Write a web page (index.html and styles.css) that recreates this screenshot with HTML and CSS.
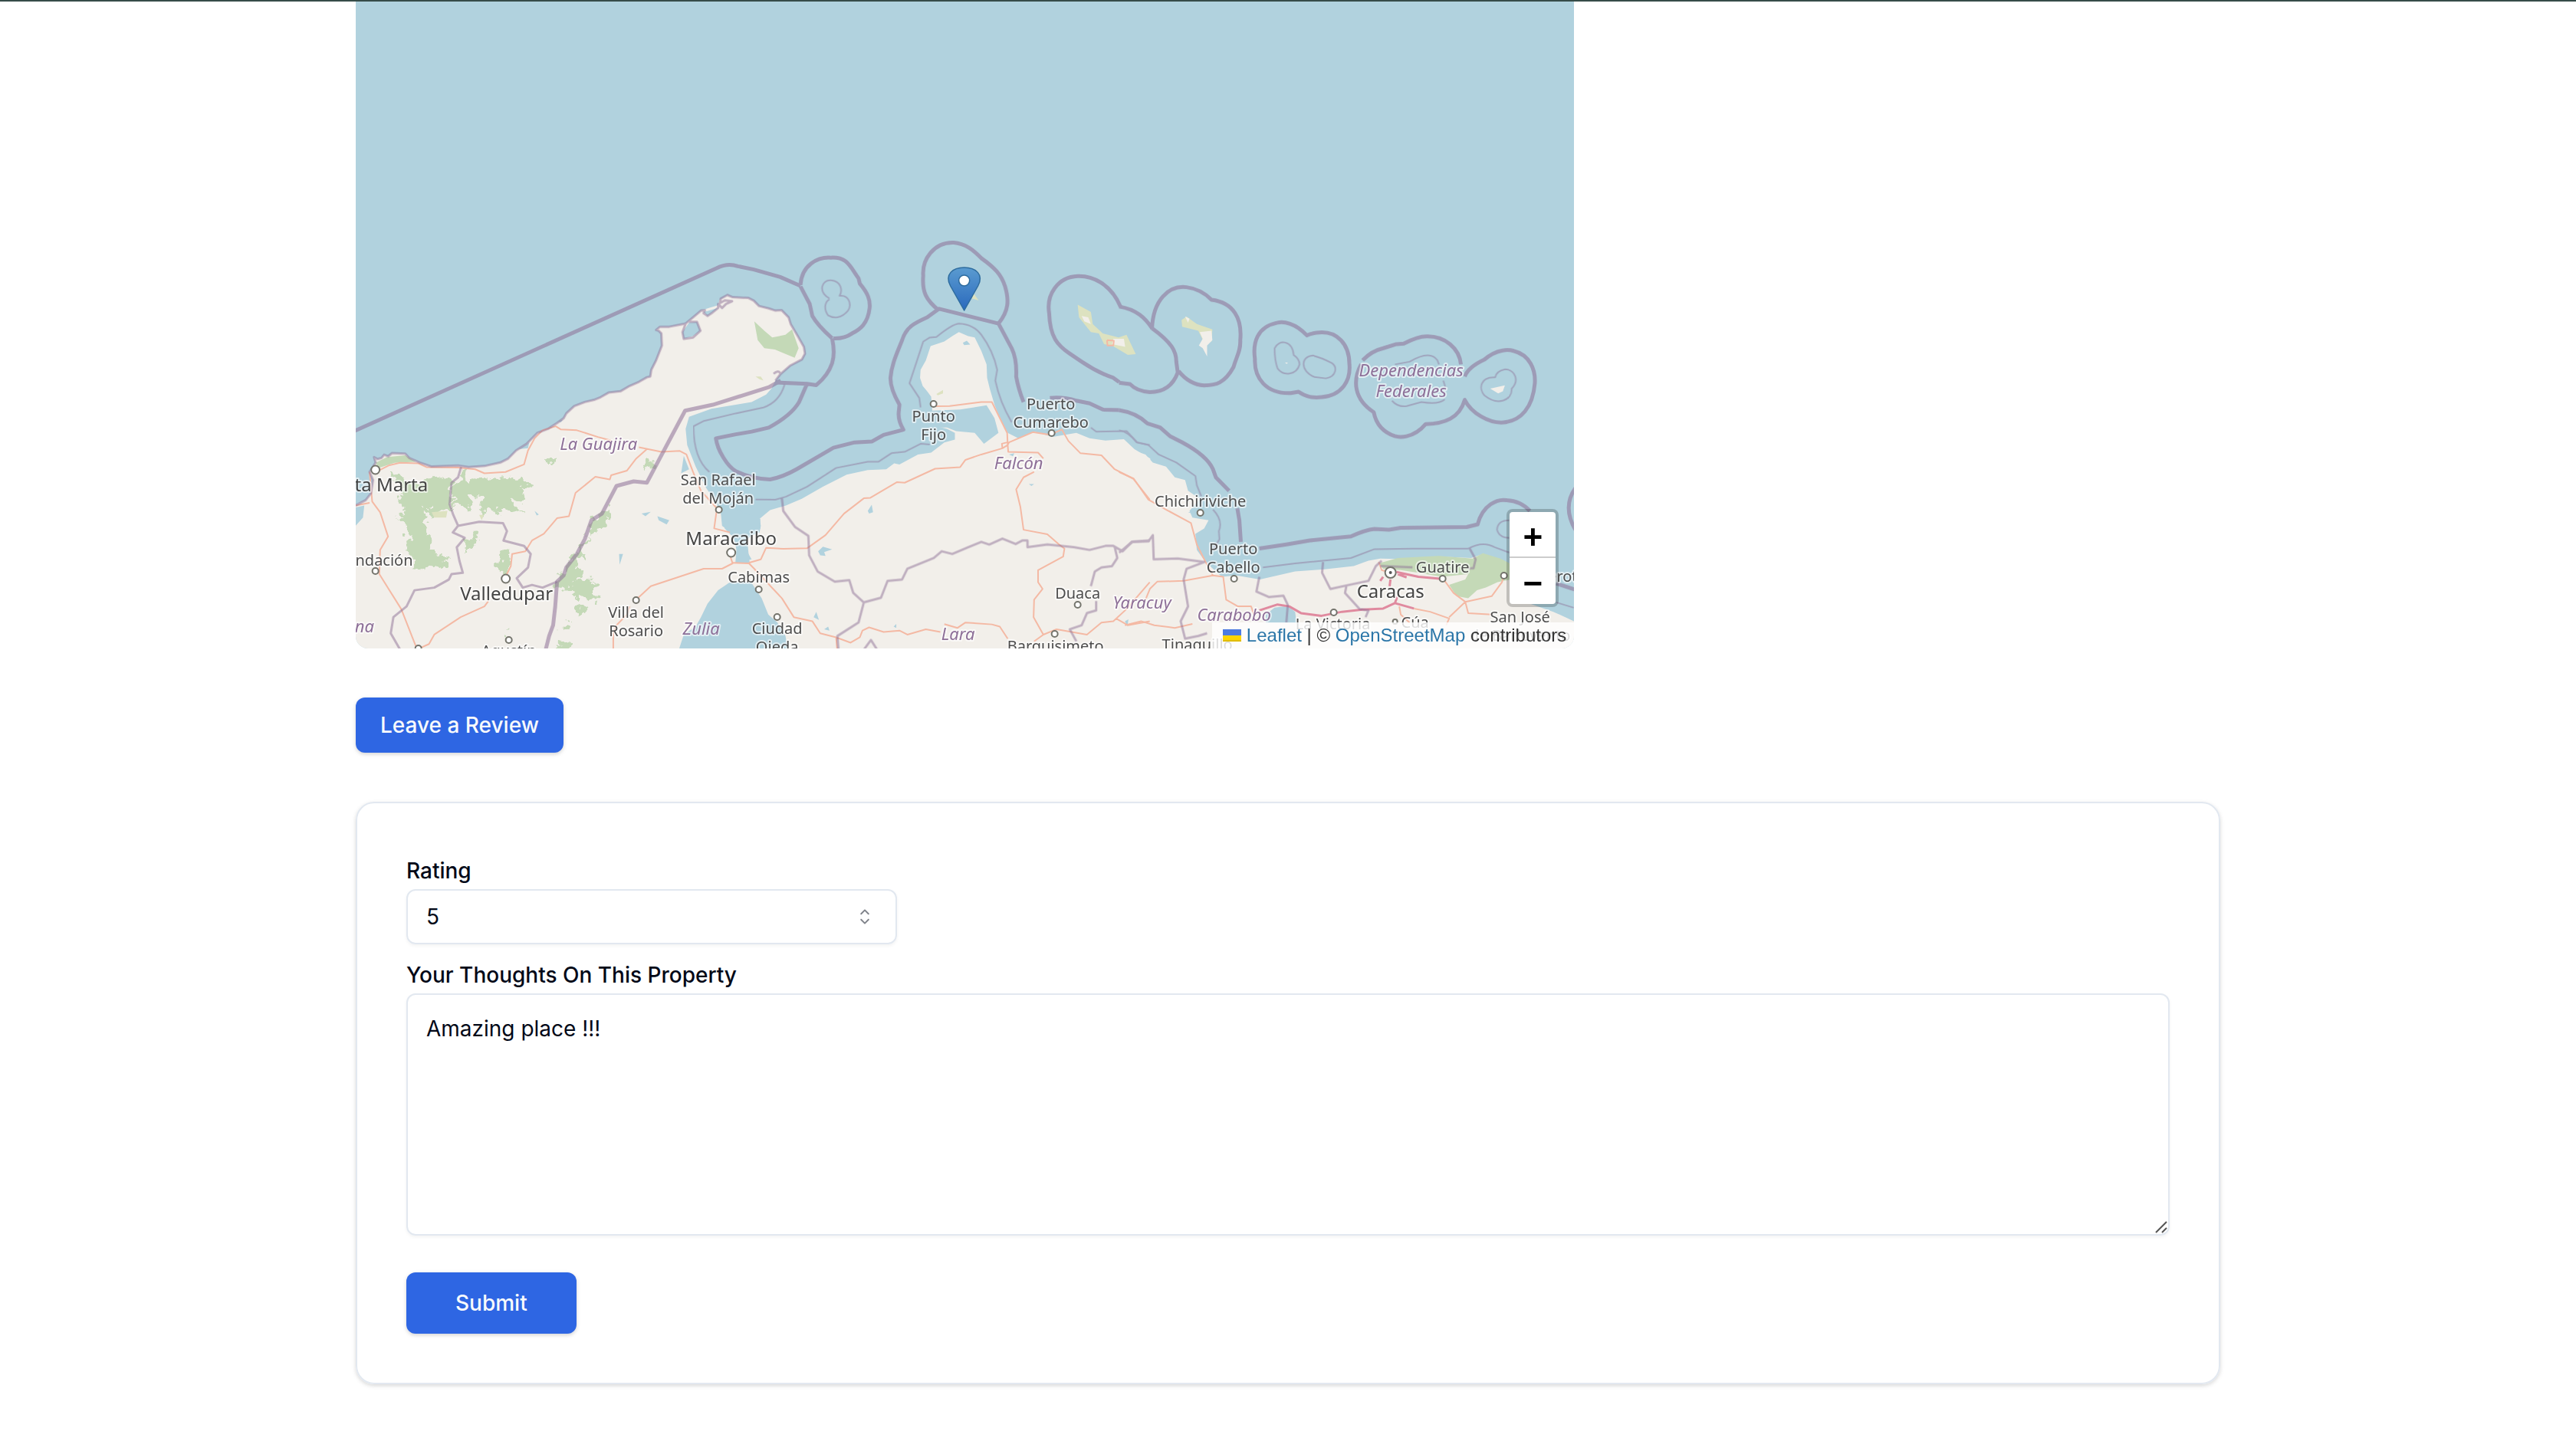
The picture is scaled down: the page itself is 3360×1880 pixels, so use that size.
FILE: index.html
```html
<!DOCTYPE html>
<html lang="en">
<head>
<meta charset="utf-8">
<title>Property</title>
<link rel="stylesheet" href="styles.css">
</head>
<body>
<header class="navbar"></header>
<main class="container">
  <section class="details">
    <div class="map">
      <svg class="tiles" viewBox="0 2 1590 844" preserveAspectRatio="xMidYMid slice" role="img" aria-label="Map">
        <defs>
          <linearGradient id="pin" x1="0" y1="0" x2="0" y2="1">
            <stop offset="0" stop-color="#5a9bd0"/><stop offset="1" stop-color="#2a69bd"/>
          </linearGradient>
          <filter id="ragged" x="-5%" y="-5%" width="110%" height="110%">
            <feTurbulence type="fractalNoise" baseFrequency=".09" numOctaves="3" seed="4"/>
            <feDisplacementMap in="SourceGraphic" scale="22" xChannelSelector="R" yChannelSelector="G"/>
          </filter>
        </defs>

        <!-- land -->
        <g class="land">
          <path transform="translate(-4 300) scale(.3444 .3508)" d="M0,1028 L50,1005 70,980 78,930 65,900 88,865 82,845 95,852 110,848 120,836 135,842 150,830 200,832 215,848 255,865 300,880 400,876 440,882 500,878 560,865 590,850 620,820 660,795 700,755 740,740 775,718 800,700 810,682 840,655 880,640 915,632 940,622 970,605 1015,600 1050,580 1085,565 1115,548 1128,545 1132,520 1150,485 1172,430 1170,385 1160,375 1150,372 1165,360 1200,360 1262,348 1290,325 1320,300 1350,290 1385,280 1390,260 1420,242 1440,250 1500,253 1520,263 1540,283 1577,292 1602,300 1625,298 1652,325 1660,350 1687,395 1710,435 1714,460 1702,482 1657,505 1622,535 1602,560 1587,590 1567,612 1512,640 1452,650 1360,665 1275,695 1262,740 1268,800 1300,880 1340,960 1375,1010 1395,1050 1400,1100 1440,1130 1455,1190 1450,1240 1500,1240 1500,1580 0,1580Z"/>
          <path transform="translate(496 300) scale(.3444 .3508)" d="M90,1075 L130,1042 190,1025 250,1000 330,955 420,910 500,893 570,890 600,868 620,872 690,835 740,828 790,790 830,780 830,755 800,740 760,730 740,715 745,680 740,620 725,600 708,580 698,550 700,520 720,485 738,432 790,415 820,395 845,380 880,395 905,400 930,450 950,500 952,550 962,590 980,650 1000,700 1030,755 1070,775 1130,750 1200,770 1290,755 1340,775 1400,783 1470,778 1510,815 1570,850 1570,1580 -10,1580 -10,1240 60,1225 40,1190 20,1150 90,1125 95,1100Z"/>
          <path transform="translate(996 300) scale(.3827 .3508)" d="M0,780 L50,820 90,835 115,865 160,880 190,920 225,930 235,970 275,1000 240,1045 250,1070 305,1080 290,1110 260,1130 265,1190 295,1235 350,1290 400,1285 480,1300 600,1270 700,1262 800,1250 850,1230 890,1222 1000,1225 1100,1215 1200,1220 1240,1205 1300,1225 1340,1260 1340,1330 1400,1390 1480,1420 1560,1460 1560,1580 0,1580Z"/>
        </g>

        <!-- woodland -->
        <g class="wood">
          <path transform="translate(-4 300) scale(.3444 .3508)" d="M88,866 L130,845 200,838 240,862 160,866 100,885Z M1522,340 L1560,375 1590,400 1640,390 1665,370 1690,440 1675,475 1600,445 1560,440 1535,410Z"/>
          <path transform="translate(996 300) scale(.3827 .3508)" d="M885,1240 L950,1220 1090,1212 1205,1222 1240,1202 1300,1222 1340,1245 1335,1300 1290,1310 1250,1330 1220,1340 1190,1370 1150,1362 1125,1320 1180,1300 1190,1280 1100,1290 1020,1275 960,1265 900,1260Z"/>
        </g>
        <g class="wood" filter="url(#ragged)">
          <path transform="translate(-4 300) scale(.3444 .3508)" d="M150,910 L185,905 200,935 270,930 330,920 370,935 372,980 375,1040 350,1050 330,1040 300,1075 290,1040 270,1045 275,1090 295,1110 290,1190 370,1220 350,1245 310,1240 280,1265 235,1255 240,1215 205,1190 215,1110 170,1080 205,1050 170,1000 195,960Z M415,890 L435,900 420,920 520,925 600,920 635,935 690,945 630,965 650,990 610,1010 650,1050 590,1040 550,1055 520,1030 495,1060 485,1000 440,990 450,1050 410,1020 380,1030 380,940 410,920Z M1105,870 L1120,855 1150,865 1140,895 1100,885Z M970,1030 L975,1080 940,1120 890,1125 905,1080Z M890,1125 L870,1220 850,1240 865,1280 845,1300 880,1310 930,1295 915,1350 935,1385 885,1370 855,1375 820,1330 770,1330 800,1260 850,1200Z M745,845 L760,850 755,875 742,868Z M560,1190 L595,1190 600,1240 580,1270 555,1270Z M480,1120 L470,1160 440,1200 415,1200 440,1145Z M855,1395 L885,1400 880,1430 850,1440Z M790,1465 L835,1450 820,1485 790,1490Z M785,1535 L840,1530 820,1568 770,1568Z M585,1485 L598,1500 590,1512Z"/>
        </g>
        <g class="scrub">
          <path transform="translate(496 300) scale(.3444 .3508)" d="M1295,278 L1345,305 1352,350 1390,385 1450,400 1480,390 1515,462 1485,465 1425,430 1395,425 1375,385 1345,380 1300,325Z M760,610 L785,595 785,608 765,615Z M75,545 L95,545 105,560 90,555Z M900,235 L920,262 895,255Z"/>
          <path transform="translate(996 300) scale(.3827 .3508)" d="M213,335 L230,322 265,350 318,370 315,415 290,420 270,375 215,360Z"/>
          <path transform="translate(-4 300) scale(.3444 .3508)" d="M300,1050 L360,1045 355,1070 310,1070Z M480,1060 L497,1060 490,1080Z"/>
        </g>
        <g class="land">
          <path transform="translate(496 300) scale(.3444 .3508)" d="M1310,320 L1335,325 1345,350 1320,340Z M1430,405 L1470,405 1475,435 1425,425Z"/>
          <path transform="translate(996 300) scale(.3827 .3508)" d="M225,322 L240,330 235,345Z M275,380 L315,375 318,410 300,430 300,470 285,440 272,430 285,405Z M1265,590 L1315,578 1308,600 1292,608Z M565,493 L575,493 572,498Z"/>
        </g>

        <!-- lakes and bays -->
        <g class="water">
          <path transform="translate(-4 300) scale(.3444 .3508)" d="M1392,1030 L1452,1040 1545,1075 1545,1110 1495,1150 1500,1200 1505,1240 1455,1240 1455,1190 1450,1150 1410,1110Z M1430,1310 L1385,1340 1345,1390 1320,1440 1300,1475 1255,1505 1230,1580 1655,1580 1640,1510 1610,1460 1575,1430 1550,1370 1510,1310Z M1250,380 L1275,345 1305,342 1318,375 1290,395 1255,405Z M1330,305 L1350,300 1385,290 1345,320Z M1095,1055 L1130,1048 1110,1065Z M1155,1065 L1200,1080 1190,1095 1160,1080Z M1255,840 L1275,890 1245,905Z M1010,1205 L1025,1205 1012,1245Z M0,1035 L45,1025 40,1070 12,1100 0,1110Z M690,1045 L706,1058 698,1062Z M630,815 L670,790 665,812Z M775,712 L798,705 790,715Z"/>
          <path transform="translate(496 300) scale(.3444 .3508)" d="M720,690 L745,672 850,668 950,652 980,700 995,755 940,795 905,755 835,748 800,735 760,735 725,740Z M312,1195 L330,1178 365,1188 335,1198 340,1212 320,1210Z M860,420 L875,412 888,426 865,428Z M500,1045 L515,1022 520,1050 505,1055Z M295,1440 L305,1420 315,1450Z M335,1485 L350,1475 355,1490Z M1110,945 L1130,945 1120,952Z M598,1475 L608,1465 608,1480Z M1035,835 L1055,830 1050,842Z"/>
          <path transform="translate(996 300) scale(.3827 .3508)" d="M500,1430 L530,1405 575,1398 600,1420 605,1462 500,1462Z M235,1050 L270,1045 265,1060Z M20,1455 L32,1448 28,1475Z"/>
        </g>

        <!-- roads -->
        <g class="road">
          <path transform="translate(-4 300) scale(.3444 .3508)" d="M90,900 L140,875 180,866 250,868 280,882 400,884 465,890 500,905 580,900 650,872 665,820 690,775 720,745 770,730 790,742 850,745 930,770 980,783 M1085,808 L1170,825 1240,822 1265,835 1290,900 1320,970 1380,1035 M1115,815 L1075,850 1040,895 980,912 975,928 920,918 845,978 820,1065 775,1072 725,1130 680,1155 655,1195 605,1205 600,1250 570,1310 M65,900 L75,1010 105,1050 135,1140 105,1190 102,1280 185,1410 245,1560 290,1540 310,1505 410,1440 500,1400 515,1380 M1430,1210 L1440,1240 1400,1260 1330,1260 1130,1325 1075,1375 M1050,1400 L1040,1430 1000,1470 988,1500 988,1580 M1380,1040 L1370,1110 1430,1125 M65,1015 L12,1025"/>
          <path transform="translate(496 300) scale(.3444 .3508)" d="M-12,1238 L50,1240 70,1260 175,1370 220,1440 290,1455 320,1500 380,1515 435,1535 470,1515 480,1490 505,1478 560,1495 620,1490 650,1505 720,1485 775,1495 M790,1466 L840,1480 870,1460 970,1467 1000,1475 1030,1520 M50,1238 L95,1225 115,1182 180,1186 270,1184 340,1135 410,1055 485,998 510,996 610,938 640,940 755,888 850,882 870,855 930,835 1010,812 1030,800 1028,755 970,640 930,640 810,655 750,656 M1030,800 L1035,790 1125,752 1190,762 1235,742 1260,785 1305,830 1385,838 1435,890 1505,925 1568,1003 M1010,812 L1008,795 1028,790 M1030,800 L1032,825 1145,828 1165,850 M1130,900 L1090,920 1062,965 1078,1030 1090,1115 1180,1132 1225,1170 1245,1185 1240,1215 1145,1265 1145,1310 1162,1335 1130,1375 1128,1440 1165,1505 1215,1485 1330,1505 1385,1460 1430,1455 1480,1410 1568,1310 M1440,1445 L1485,1470 1568,1455 M1165,1505 L1130,1530 M380,1515 L385,1570 M1406,410 L1408,430 1430,430 1432,412 1406,410"/>
          <path transform="translate(996 300) scale(.3827 .3508)" d="M0,900 L50,925 100,1003 160,1040 245,1090 265,1170 295,1235 320,1285 355,1290 365,1375 405,1400 450,1400 460,1430 M320,1285 L220,1305 130,1308 105,1335 90,1375 M20,1470 L75,1455 120,1470 190,1480 250,1465 M885,1235 L895,1265 925,1275 M1105,1298 L1140,1350 1180,1383 1270,1362 1305,1310 1312,1285 M1180,1383 L1190,1425 1270,1430 M1180,1383 L1125,1440 M955,1400 L960,1430 990,1460 M1005,1408 L1060,1420 1125,1445 1115,1470"/>
        </g>
        <g class="motorway">
          <path transform="translate(996 300) scale(.3827 .3508)" d="M478,1415 L540,1393 580,1400 620,1425 690,1435 760,1420 830,1412 900,1408 940,1388 1005,1408 M940,1388 L948,1365 M945,1272 L1020,1290 1100,1298 M925,1300 L922,1325 M950,1280 L980,1292 M890,1305 L900,1290"/>
        </g>

        <!-- coastline that doubles as a boundary, and state borders -->
        <g class="state">
          <path transform="translate(-4 300) scale(.3444 .3508)" d="M12,1025 L50,1005 70,980 78,930 65,900 88,865 82,845 95,852 110,848 120,836 135,842 150,830 200,832 215,848 255,865 300,880 400,876 440,882 500,878 560,865 590,850 620,820 660,795 700,755 740,740 775,718 800,700 810,682 840,655 880,640 915,632 940,622 970,605 1015,600 1050,580 1085,565 1115,548 1128,545 1132,520 1150,485 1172,430 1170,385 1160,375 1150,372 1165,360 1200,360 1262,348 1290,325 1320,300 1335,298 1330,310 1345,320 1360,310 1385,290 1385,275 1400,290 1415,275 1438,265 1410,262 1392,272 1395,255 1420,242 1440,250 1500,253 1520,263 1540,283 1577,292 1602,300 1625,298 1652,325 1660,350 1687,395 1710,435 1714,460 1702,482 1657,505 1622,535 1602,560 M1595,535 Q1610,520 1620,532 M1262,348 L1250,380 1255,405 1290,400 1318,375 1305,342 1275,342"/>
          <path transform="translate(-4 300) scale(.3444 .3508)" d="M412,880 L400,920 375,940 368,1020 382,1060 400,1100 380,1125 425,1145 395,1180 405,1230 418,1275 375,1280 365,1300 310,1330 235,1340 205,1400 155,1440 145,1500 180,1560 M400,1100 L480,1085 570,1090 585,1120 572,1155 650,1175 675,1205 665,1255 622,1295 645,1330 680,1320 720,1330 775,1308"/>
          <path transform="translate(496 300) scale(.3444 .3508)" d="M175,998 L180,1045 225,1105 275,1138 278,1210 310,1270 375,1308 430,1302 445,1350 485,1385 550,1368 575,1305 630,1300 650,1260 700,1240 750,1220 780,1195 820,1205 880,1180 930,1160 960,1170 1010,1148 1060,1168 1085,1155 1105,1155 1105,1180 1180,1170 1280,1180 1340,1190 1400,1175 1430,1175 1465,1195 1500,1160 1568,1155 M485,1385 L465,1460 385,1510 390,1570 M1435,1178 L1445,1220 1425,1250 1385,1255 1360,1270 1345,1325 M1365,1380 L1365,1415 1330,1425 1310,1470 1265,1485 1290,1530 M480,1568 L512,1525 540,1568"/>
          <path transform="translate(996 300) scale(.3827 .3508)" d="M0,1200 L45,1160 100,1158 115,1135 118,1225 200,1222 290,1235 230,1260 220,1300 235,1400 210,1455 225,1520 270,1510 300,1500 M478,1290 L468,1345 510,1365 560,1360 575,1395 570,1460 M695,1235 L692,1275 720,1335 775,1322 850,1305 875,1250 895,1230 M775,1322 L770,1350 820,1410 850,1415 840,1440 M890,1250 L1000,1255 M1195,1185 L1215,1225 1208,1258 1190,1258"/>
        </g>

        <!-- national and maritime borders -->
        <g class="border">
          <path transform="translate(-4 300) scale(.3444 .3508)" d="M0,751 L1380,142 Q1420,122 1460,135 L1520,147 1620,175 1697,208 M1622,560 L1577,585 1365,650 1260,672 1115,940 1065,935 1000,952 985,980 945,1055 905,1080 880,1150 850,1205 810,1255 800,1285 775,1308 768,1400 760,1470 745,1510 730,1568"/>
          <path transform="translate(496 300) scale(.3444 .3508)" d="M245,210 L280,275 290,320 Q310,355 365,403 M245,205 C250,130 310,100 360,103 C420,100 430,130 465,180 L470,200 C500,235 510,260 507,290 C500,350 470,370 440,385 Q410,405 370,403 M365,403 C375,450 370,480 365,495 Q350,540 305,577 L270,572 150,567 M270,572 L240,640 Q210,690 125,735 L60,750 0,760 -75,775 C-70,820 -30,880 0,897 Q60,925 130,928 Q180,918 230,890 L370,810 450,790 515,787 560,762 635,743 Q615,710 617,680 L620,650 Q585,590 586,550 C590,500 610,460 630,410 C645,360 680,345 725,325 L770,293 995,348 M770,300 C720,260 705,230 710,170 C705,110 750,45 825,47 C870,50 900,75 930,105 C980,140 1005,165 1020,210 C1035,260 1035,300 995,348 L1045,440 Q1065,480 1062,545 Q1070,590 1090,640 M1190,625 Q1240,620 1290,635 L1340,645 1390,668 1452,670 M1457,285 C1420,200 1350,170 1295,172 C1220,175 1175,240 1187,310 C1190,400 1220,430 1265,460 L1310,490 Q1370,530 1430,550 L1452,566"/>
          <path transform="translate(996 300) scale(.3827 .3508)" d="M0,670 Q60,680 97,720 L140,735 175,768 215,790 Q300,840 320,890 L330,920 375,970 M403,1035 L410,1080 415,1160 M478,1185 L570,1170 650,1155 790,1140 Q840,1115 870,1112 L920,1115 960,1108 1185,1105 1222,1095 C1240,1020 1290,1000 1320,1005 Q1370,1008 1400,1045 M0,285 C60,295 90,330 112,365 C180,420 195,450 195,490 L200,530 C180,590 140,603 105,603 Q60,600 37,573 L0,568 M112,370 C115,260 170,205 230,213 Q280,220 315,260 C390,270 420,330 413,410 C415,450 400,470 390,510 C360,570 330,578 290,578 Q240,575 203,525 M640,392 C600,345 560,340 540,345 C470,360 455,420 463,480 C460,550 500,610 585,607 L612,602 C640,622 660,625 690,622 C760,615 790,560 785,500 C785,420 740,380 690,381 Q660,382 640,392Z M830,485 Q860,450 900,440 L945,425 970,423 Q1020,395 1050,396 C1110,395 1160,440 1165,500 M1178,545 Q1190,510 1245,482 C1290,440 1330,445 1345,450 C1400,465 1420,520 1417,570 C1410,660 1370,710 1310,716 C1260,720 1200,680 1178,632 C1160,700 1110,720 1045,722 C1000,780 950,770 940,767 Q880,745 868,678 C800,630 795,560 825,500 M1555,960 Q1510,1030 1555,1115 M1490,1315 L1560,1340"/>
        </g>
        <g class="baseline">
          <path transform="translate(496 300) scale(.3444 .3508)" d="M355,255 C310,230 325,185 360,187 C400,190 405,225 393,245 C430,240 440,280 425,300 C400,330 370,330 350,318 C330,290 340,265 355,258 M185,575 Q165,640 105,660 L0,682 -120,710 -160,730 Q-160,850 -100,900 M75,1002 L150,1003 190,992 270,955 380,885 500,862 540,862 590,830 640,825 700,795 735,798 M700,660 L695,625 658,570 685,490 710,415 735,400 760,398 Q820,350 845,348 Q900,350 930,390 Q975,450 990,520 L983,560 Q1000,640 1045,715 M1345,735 L1365,750 1480,748 1520,790 1568,800"/>
          <path transform="translate(996 300) scale(.3827 .3508)" d="M0,745 Q30,750 60,790 L100,800 135,835 195,865 260,915 265,950 280,990 M320,1040 Q355,1080 340,1120 L342,1150 320,1190 M490,1255 L600,1240 790,1220 870,1187 1000,1185 1190,1185 Q1240,1155 1280,1180 L1330,1200 M1330,1080 Q1290,1080 1288,1115 Q1295,1145 1330,1145 M595,465 C590,410 545,405 530,440 C530,480 535,500 540,515 C560,545 605,540 615,500 Q615,480 595,465Z M660,467 C620,470 615,520 665,547 L705,552 C740,545 745,510 725,495 Q690,475 660,467Z M940,500 L990,490 Q1060,445 1085,485 L1090,500 M1105,560 L1112,585 M930,635 Q950,660 980,655 L1030,640 Q1090,650 1110,630 M1282,548 C1230,545 1225,590 1245,615 C1290,655 1340,635 1338,590 C1365,560 1350,520 1315,518 Q1285,525 1282,548Z M1490,1385 L1550,1405"/>
        </g>

        <!-- places -->
        <g class="dots">
          <circle cx="26" cy="613" r="5.5"/><circle cx="196" cy="755" r="5.5"/><circle cx="490" cy="721" r="5.5"/>
          <circle cx="26" cy="745" r="4"/><circle cx="366" cy="783" r="4"/><circle cx="474" cy="665" r="4"/><circle cx="526" cy="769" r="4"/><circle cx="550" cy="805" r="4"/><circle cx="200" cy="835" r="4"/><circle cx="82" cy="846" r="4"/>
          <circle cx="754" cy="527" r="4"/><circle cx="908" cy="565" r="4"/><circle cx="942" cy="789" r="4"/><circle cx="912" cy="827" r="4"/><circle cx="1102" cy="669" r="4"/><circle cx="1146" cy="755" r="4"/><circle cx="1276" cy="799" r="4"/><circle cx="1418" cy="755" r="4"/><circle cx="1498" cy="751" r="4"/><circle cx="1356" cy="811" r="3"/>
          <circle cx="1350" cy="747" r="7"/><circle class="core" cx="1350" cy="747" r="2"/>
        </g>
        <g class="town">
          <text x="473" y="633">San Rafael</text><text x="473" y="657">del Moján</text>
          <text x="366" y="806">Villa del</text><text x="366" y="830">Rosario</text>
          <text x="526" y="760">Cabimas</text>
          <text x="550" y="827">Ciudad</text><text x="550" y="851">Ojeda</text>
          <text x="754" y="550">Punto</text><text x="754" y="574">Fijo</text>
          <text x="907" y="534">Puerto</text><text x="907" y="558">Cumarebo</text>
          <text x="942" y="781">Duaca</text><text x="913" y="850">Barquisimeto</text>
          <text x="1102" y="661">Chichiriviche</text>
          <text x="1145" y="723">Puerto</text><text x="1145" y="747">Cabello</text>
          <text x="1098" y="848">Tinaquillo</text>
          <text x="1275" y="821">La Victoria</text><text x="1382" y="819">Cúa</text>
          <text x="1418" y="747">Guatire</text><text x="1519" y="812">San José</text>
          <text x="1519" y="836">de Barlovento</text>
          <text x="200" y="856">Agustín</text>
          <text x="26" y="738">Fundación</text><text x="1558" y="759">Higuerote</text>
        </g>
        <g class="city">
          <text x="26" y="641">Santa Marta</text><text x="197" y="783">Valledupar</text>
          <text x="490" y="711">Maracaibo</text><text x="1350" y="780">Caracas</text>
        </g>
        <g class="region">
          <text x="317" y="587">La Guajira</text><text x="451" y="828">Zulia</text>
          <text x="865" y="612">Falcón</text><text x="786" y="835">Lara</text>
          <text x="1026" y="794">Yaracuy</text><text x="1146" y="810">Carabobo</text>
          <text x="1377" y="491">Dependencias</text><text x="1377" y="518">Federales</text>
          <text x="-31" y="825">Magdalena</text>
        </g>

        <!-- property marker -->
        <path fill="url(#pin)" stroke="#2e6c9e" stroke-width="1.5" d="M794,405 L776,373 C768,358 779,349 794,349 C809,349 820,358 812,373Z"/>
        <circle cx="794" cy="366" r="7" fill="#fff" stroke="#2e6c9e" stroke-width="1.5"/>
      </svg>
      <div class="map-controls">
        <div class="zoom">
          <button type="button" class="zoom-btn" aria-label="Zoom in">+</button>
          <button type="button" class="zoom-btn" aria-label="Zoom out">−</button>
        </div>
        <div class="attribution">
          <a href="#leaflet"><svg class="flag" viewBox="0 0 12 8" aria-hidden="true"><path fill="#4c7be1" d="M0 0h12v4H0z"/><path fill="#ffd500" d="M0 4h12v3H0z"/><path fill="#e0bc00" d="M0 7h12v1H0z"/></svg> Leaflet</a> | © <a href="#osm">OpenStreetMap</a> contributors
        </div>
      </div>
    </div>
  </section>

  <button type="button" class="btn">Leave a Review</button>

  <form class="card">
    <div class="field">
      <label for="rating">Rating</label>
      <div class="select">
        <select id="rating" name="rating">
          <option selected>5</option><option>4</option><option>3</option><option>2</option><option>1</option>
        </select>
        <svg class="caret" viewBox="0 0 15 15" fill="currentColor" aria-hidden="true"><path d="M4.93179 5.43179C4.75605 5.60753 4.75605 5.89245 4.93179 6.06819C5.10753 6.24392 5.39245 6.24392 5.56819 6.06819L7.49999 4.13638L9.43179 6.06819C9.60753 6.24392 9.89245 6.24392 10.0682 6.06819C10.2439 5.89245 10.2439 5.60753 10.0682 5.43179L7.81819 3.18179C7.73379 3.0974 7.61933 3.04999 7.49999 3.04999C7.38064 3.04999 7.26618 3.0974 7.18179 3.18179L4.93179 5.43179ZM10.0682 9.56819C10.2439 9.39245 10.2439 9.10753 10.0682 8.93179C9.89245 8.75606 9.60753 8.75606 9.43179 8.93179L7.49999 10.8636L5.56819 8.93179C5.39245 8.75606 5.10753 8.75606 4.93179 8.93179C4.75605 9.10753 4.75605 9.39245 4.93179 9.56819L7.18179 11.8182C7.35753 11.9939 7.64245 11.9939 7.81819 11.8182L10.0682 9.56819Z"/></svg>
      </div>
    </div>
    <div class="field">
      <label for="comment">Your Thoughts On This Property</label>
      <div class="textarea">
        <textarea id="comment" name="comment">Amazing place !!!</textarea>
        <svg class="grip" viewBox="0 0 16 16" aria-hidden="true"><path d="M1 15 15 1M9 15l6-6"/></svg>
      </div>
    </div>
    <button type="submit" class="btn btn-lg">Submit</button>
  </form>
</main>
</body>
</html>
```

FILE: styles.css
```css
:root {
  --ink: #020817;
  --line: #e2e8f0;
  --primary: #2e66e3;
}

* {
  box-sizing: border-box;
}

body {
  margin: 0;
  background: #fff;
  color: var(--ink);
  font: 400 28px/40px Inter, "Liberation Sans", sans-serif;
}

.navbar {
  height: 2px;
  background: #364c48;
}

.container {
  max-width: 2560px;
  margin: 0 auto;
  padding: 0 64px 64px;
}

.details {
  display: grid;
  grid-template-columns: repeat(12, minmax(0, 1fr));
  column-gap: 96px;
  margin-bottom: 64px;
}

/* Map */

.map {
  grid-column: span 8;
  position: relative;
  height: 844px;
  overflow: hidden;
  border-radius: 0 0 16px 16px;
  background: #b1d2de;
}

.tiles {
  position: absolute;
  inset: 0;
  width: 100%;
  height: 100%;
}

.tiles path {
  vector-effect: non-scaling-stroke;
  stroke-linejoin: round;
}

.land { fill: #f2efea; }
.wood { fill: #c4d9b7; }
.scrub { fill: #dde2c0; }
.water { fill: #b1d2de; }

.road,
.motorway,
.state,
.border,
.baseline {
  fill: none;
}

.road { stroke: #f4b9a4; stroke-width: 2px; }
.motorway { stroke: #e08a9f; stroke-width: 3px; }

.state,
.border,
.baseline {
  stroke: #8c6e95;
}

.state { stroke-width: 3px; opacity: .5; }
.border { stroke-width: 5px; opacity: .55; }
.baseline { stroke-width: 2px; opacity: .45; }

.dots { fill: #fff; stroke: #74746c; stroke-width: 2px; }
.core { fill: #555; stroke: none; }

.tiles text {
  font-family: "Noto Sans", sans-serif;
  text-anchor: middle;
  paint-order: stroke;
  stroke: rgba(255, 255, 255, .6);
  stroke-width: 4px;
  stroke-linejoin: round;
}

.town { font-size: 20px; fill: #4d4d4d; }
.city { font-size: 24px; fill: #444; }
.region { font-size: 22px; font-style: italic; fill: #8d6f98; }

.map-controls {
  position: absolute;
  right: 0;
  bottom: 0;
  display: flex;
  flex-direction: column;
  align-items: flex-end;
  gap: 20px;
}

.zoom {
  display: flex;
  flex-direction: column;
  margin-right: 20px;
  border: 4px solid rgba(0, 0, 0, .2);
  border-radius: 8px;
  background: #fff;
  background-clip: padding-box;
}

.zoom-btn {
  width: 60px;
  height: 60px;
  padding: 12px 0 0;
  border: 0;
  background: none;
  color: #000;
  font: 700 44px/48px "Liberation Mono", monospace;
}

.zoom-btn:first-child {
  border-bottom: 2px solid #ccc;
}

.attribution {
  padding: 0 10px 0 14px;
  background: rgba(255, 255, 255, .8);
  color: #333;
  font: 400 24px/34px "Liberation Sans", Arial, sans-serif;
  white-space: nowrap;
}

.attribution a {
  color: #2b76a8;
  text-decoration: none;
}

.flag {
  width: 24px;
  height: 16px;
}

/* Buttons */

.btn {
  display: block;
  height: 72px;
  padding: 0 32px;
  border: 0;
  border-radius: 12px;
  background: var(--primary);
  box-shadow: 0 2px 6px rgba(0, 0, 0, .1), 0 2px 4px rgba(0, 0, 0, .08);
  color: #f8fafc;
  font: inherit;
  font-weight: 500;
}

.btn-lg {
  height: 80px;
  padding: 0 64px;
}

/* Review form */

.card {
  margin-top: 64px;
  padding: 64px;
  border: 2px solid var(--line);
  border-radius: 24px;
  box-shadow: 0 2px 6px rgba(0, 0, 0, .1), 0 2px 4px rgba(0, 0, 0, .06);
}

.field {
  display: flex;
  flex-direction: column;
  margin-bottom: 16px;
}

.field label {
  align-self: flex-start;
  font-weight: 500;
  line-height: 48px;
}

.select {
  position: relative;
  width: 100%;
  max-width: 640px;
}

.textarea {
  position: relative;
}

select,
textarea {
  display: block;
  width: 100%;
  border: 2px solid var(--line);
  border-radius: 12px;
  background: transparent;
  box-shadow: 0 2px 4px rgba(0, 0, 0, .05);
  color: inherit;
  font: inherit;
}

select {
  appearance: none;
  height: 72px;
  padding: 0 24px;
}

.caret {
  position: absolute;
  top: 20px;
  right: 26px;
  width: 32px;
  height: 32px;
  opacity: .5;
  pointer-events: none;
}

textarea {
  height: 316px;
  padding: 24px;
  resize: vertical;
}

textarea::-webkit-resizer {
  display: none;
}

.grip {
  position: absolute;
  right: 3px;
  bottom: 3px;
  width: 16px;
  height: 16px;
  fill: none;
  stroke: #555;
  stroke-width: 2px;
  pointer-events: none;
}

.field + .btn {
  margin-top: 48px;
}
```
